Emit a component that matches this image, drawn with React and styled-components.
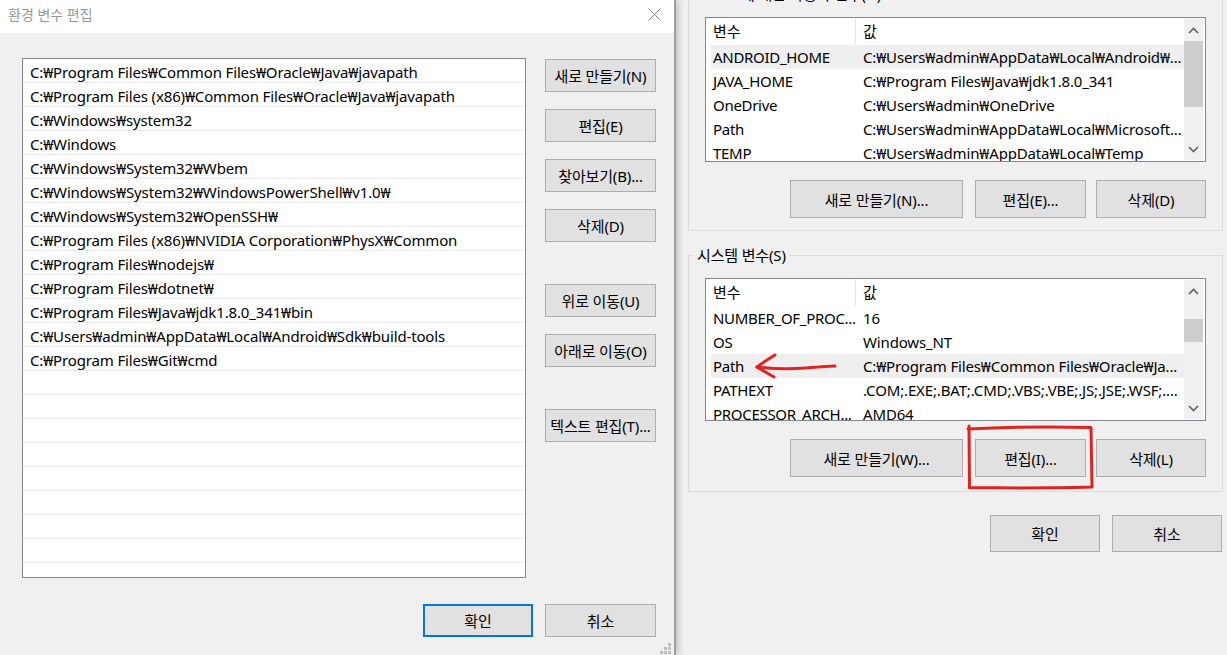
import React from 'react';
import styled, { createGlobalStyle } from 'styled-components';

const GlobalStyle = createGlobalStyle`
  html, body { margin: 0; padding: 0; width: 1227px; height: 655px; overflow: hidden; background: #f0f0f0; }
  body { font-family: "Noto Sans", "Noto Sans CJK KR", sans-serif; font-size: 15px; color: #000; letter-spacing: -0.15px; }
  * { box-sizing: border-box; }
`;

const Screen = styled.div`
  display: flex;
  width: 1227px;
  height: 655px;
  overflow: hidden;
  background: #f0f0f0;
`;

/* ---------- left dialog ---------- */
const Dialog = styled.div`
  position: relative;
  z-index: 2;
  flex: none;
  width: 676px;
  display: flex;
  flex-direction: column;
  background: #f0f0f0;
  border-right: 2px solid #9d9d9d;
  box-shadow: 2px 0 7px rgba(0, 0, 0, 0.22);
`;

const TitleBar = styled.div`
  height: 33px;
  background: #fff;
  display: flex;
  align-items: center;
  justify-content: space-between;
  padding: 0 13px 5px 8px;
`;

const Title = styled.span`
  color: #999;
  font-size: 14px;
  letter-spacing: 0;
`;

const DialogBody = styled.div`
  flex: 1;
  display: flex;
  flex-direction: column;
  padding: 25px 18px 0 22px;
`;

const MainRow = styled.div`
  display: flex;
  align-items: flex-start;
  gap: 19px;
`;

const PathList = styled.div`
  width: 504px;
  height: 520px;
  background: #fff;
  border: 1px solid #828790;
  overflow: hidden;
`;

const PathRow = styled.div`
  height: 24px;
  line-height: 23px;
  padding: 2px 0 0 7px;
  border-bottom: 1px solid #ececec;
  white-space: nowrap;
  overflow: hidden;
`;

const SideButtons = styled.div`
  display: flex;
  flex-direction: column;
  padding-top: 1px;
`;

const Button = styled.button`
  flex: none;
  width: ${(p) => p.$w || 111}px;
  height: ${(p) => p.$h || 33}px;
  margin-top: ${(p) => p.$mt || 0}px;
  padding: 0;
  background: #e1e1e1;
  border: ${(p) => (p.$default ? '2px solid #0078d7' : '1px solid #adadad')};
  font-family: inherit;
  font-size: 15px;
  letter-spacing: -0.15px;
  color: #000;
  white-space: nowrap;
  cursor: default;
`;

const Footer = styled.div`
  display: flex;
  justify-content: flex-end;
  gap: ${(p) => p.$gap || 12}px;
  margin-top: ${(p) => p.$mt || 26}px;
  padding-right: ${(p) => p.$pr || 0}px;
`;

const Grip = styled.svg`
  position: absolute;
  right: 2px;
  bottom: 0;
`;

/* ---------- right window ---------- */
const Window = styled.div`
  flex: 1;
  min-width: 0;
  display: flex;
  flex-direction: column;
  padding: 0 4px 0 12px;
`;

const GroupBox = styled.div`
  position: relative;
  min-width: 0;
  border: 1px solid #dcdcdc;
  margin-top: ${(p) => p.$mt}px;
  padding: 22px 16px ${(p) => p.$pb}px 16px;
  display: flex;
  flex-direction: column;
`;

const Legend = styled.span`
  position: absolute;
  top: -11px;
  left: 5px;
  padding: 0 3px;
  line-height: 20px;
  background: #f0f0f0;
  white-space: nowrap;
`;

const ListView = styled.div`
  position: relative;
  height: ${(p) => p.$h}px;
  display: flex;
  background: #fff;
  border: 1px solid #828790;
  overflow: hidden;
`;

const ListMain = styled.div`
  flex: 1;
  min-width: 0;
  display: flex;
  flex-direction: column;
`;

const Header = styled.div`
  flex: none;
  height: 27px;
  display: flex;
`;

const HeaderCell = styled.div`
  width: ${(p) => (p.$w ? `${p.$w}px` : 'auto')};
  flex: ${(p) => (p.$w ? 'none' : 1)};
  padding-left: 7px;
  line-height: 27px;
  border-right: ${(p) => (p.$w ? '1px solid #e5e5e5' : 'none')};
`;

const VarRow = styled.div`
  flex: none;
  height: 24px;
  margin-left: 5px;
  display: flex;
  align-items: center;
  background: ${(p) => (p.$hl ? '#efefef' : 'transparent')};
  white-space: nowrap;
`;

const NameCell = styled.div`
  width: 145px;
  flex: none;
  padding-left: 2px;
  overflow: hidden;
  letter-spacing: -0.3px;
`;

const ValueCell = styled.div`
  flex: 1;
  min-width: 0;
  padding-left: 7px;
  overflow: hidden;
`;

const ScrollBar = styled.div`
  flex: none;
  width: 19px;
  margin: 1px 2px 1px 0;
  background: #f0f0f0;
  display: flex;
  flex-direction: column;
`;

const ScrollArrow = styled.div`
  flex: none;
  height: 22px;
  display: flex;
  align-items: center;
  justify-content: center;
`;

const Track = styled.div`
  flex: 1;
`;

const Thumb = styled.div`
  margin-top: ${(p) => p.$top}px;
  height: ${(p) => p.$h}px;
  background: #cdcdcd;
`;

const ButtonRow = styled.div`
  display: flex;
  justify-content: flex-end;
  margin-top: 18px;
`;

const ButtonSlot = styled.div`
  position: relative;
  margin-left: ${(p) => p.$ml || 0}px;
`;

const Annotation = styled.svg`
  position: absolute;
  left: ${(p) => p.$l}px;
  top: ${(p) => p.$t}px;
  overflow: visible;
  pointer-events: none;
`;

const Chevron = ({ up }) => (
  <svg width="11" height="7" viewBox="0 0 11 7">
    <polyline
      points={up ? '1,6 5.5,1.5 10,6' : '1,1 5.5,5.5 10,1'}
      fill="none"
      stroke="#606060"
      strokeWidth="1.6"
    />
  </svg>
);

const paths = [
  'C:₩Program Files₩Common Files₩Oracle₩Java₩javapath',
  'C:₩Program Files (x86)₩Common Files₩Oracle₩Java₩javapath',
  'C:₩Windows₩system32',
  'C:₩Windows',
  'C:₩Windows₩System32₩Wbem',
  'C:₩Windows₩System32₩WindowsPowerShell₩v1.0₩',
  'C:₩Windows₩System32₩OpenSSH₩',
  'C:₩Program Files (x86)₩NVIDIA Corporation₩PhysX₩Common',
  'C:₩Program Files₩nodejs₩',
  'C:₩Program Files₩dotnet₩',
  'C:₩Program Files₩Java₩jdk1.8.0_341₩bin',
  'C:₩Users₩admin₩AppData₩Local₩Android₩Sdk₩build-tools',
  'C:₩Program Files₩Git₩cmd',
];
const pathRows = [...paths, ...Array(9).fill('')];

const userVars = [
  ['ANDROID_HOME', 'C:₩Users₩admin₩AppData₩Local₩Android₩...', true],
  ['JAVA_HOME', 'C:₩Program Files₩Java₩jdk1.8.0_341'],
  ['OneDrive', 'C:₩Users₩admin₩OneDrive'],
  ['Path', 'C:₩Users₩admin₩AppData₩Local₩Microsoft...'],
  ['TEMP', 'C:₩Users₩admin₩AppData₩Local₩Temp'],
];

const sysVars = [
  ['NUMBER_OF_PROC...', '16'],
  ['OS', 'Windows_NT'],
  ['Path', 'C:₩Program Files₩Common Files₩Oracle₩Ja...', true],
  ['PATHEXT', '.COM;.EXE;.BAT;.CMD;.VBS;.VBE;.JS;.JSE;.WSF;....'],
  ['PROCESSOR_ARCH...', 'AMD64'],
];

const VarList = ({ rows, height, thumbTop, thumbH, children }) => (
  <ListView $h={height}>
    <ListMain>
      <Header>
        <HeaderCell $w={150}>변수</HeaderCell>
        <HeaderCell>값</HeaderCell>
      </Header>
      {rows.map(([n, v, hl]) => (
        <VarRow key={n} $hl={hl}>
          <NameCell>{n}</NameCell>
          <ValueCell>{v}</ValueCell>
        </VarRow>
      ))}
    </ListMain>
    <ScrollBar>
      <ScrollArrow><Chevron up /></ScrollArrow>
      <Track><Thumb $top={thumbTop} $h={thumbH} /></Track>
      <ScrollArrow><Chevron /></ScrollArrow>
    </ScrollBar>
    {children}
  </ListView>
);

export default function App() {
  return (
    <Screen>
      <GlobalStyle />
      <Dialog>
        <TitleBar>
          <Title>환경 변수 편집</Title>
          <svg width="13" height="13" viewBox="0 0 13 13">
            <path d="M0.5 0.5 L12.5 12.5 M12.5 0.5 L0.5 12.5" stroke="#8a8a8a" strokeWidth="1" fill="none" />
          </svg>
        </TitleBar>
        <DialogBody>
          <MainRow>
            <PathList>
              {pathRows.map((p, i) => (
                <PathRow key={i}>{p}</PathRow>
              ))}
            </PathList>
            <SideButtons>
              <Button>새로 만들기(N)</Button>
              <Button $mt={17}>편집(E)</Button>
              <Button $mt={17}>찾아보기(B)...</Button>
              <Button $mt={17}>삭제(D)</Button>
              <Button $mt={42}>위로 이동(U)</Button>
              <Button $mt={17}>아래로 이동(O)</Button>
              <Button $mt={42}>텍스트 편집(T)...</Button>
            </SideButtons>
          </MainRow>
          <Footer>
            <Button $w={110} $default>확인</Button>
            <Button>취소</Button>
          </Footer>
        </DialogBody>
        <Grip width="12" height="12" viewBox="0 0 12 12">
          <g fill="#bdbdbd">
            <rect x="8" y="0" width="3" height="3" />
            <rect x="4" y="4" width="3" height="3" />
            <rect x="8" y="4" width="3" height="3" />
            <rect x="0" y="8" width="3" height="3" />
            <rect x="4" y="8" width="3" height="3" />
            <rect x="8" y="8" width="3" height="3" />
          </g>
        </Grip>
      </Dialog>

      <Window>
        <GroupBox $mt={-6} $pb={12}>
          <Legend>admin에 대한 사용자 변수(U)</Legend>
          <VarList rows={userVars} height={145} thumbTop={0} thumbH={66} />
          <ButtonRow>
            <ButtonSlot><Button $w={173} $h={38}>새로 만들기(N)...</Button></ButtonSlot>
            <ButtonSlot $ml={12}><Button $w={111} $h={38}>편집(E)...</Button></ButtonSlot>
            <ButtonSlot $ml={10}><Button $w={110} $h={38}>삭제(D)</Button></ButtonSlot>
          </ButtonRow>
        </GroupBox>

        <GroupBox $mt={24} $pb={14}>
          <Legend>시스템 변수(S)</Legend>
          <VarList rows={sysVars} height={143} thumbTop={17} thumbH={23}>
            <Annotation $l={45} $t={70} width="90" height="36" viewBox="0 0 90 36">
              <g fill="none" stroke="#e1231f" strokeWidth="3" strokeLinecap="round" strokeLinejoin="round">
                <path d="M24 6 Q 14 12 6 18 Q 14 23 23 28" />
                <path d="M6 18 Q 30 21 55 19 T 84 17" />
              </g>
            </Annotation>
          </VarList>
          <ButtonRow>
            <ButtonSlot><Button $w={173} $h={38}>새로 만들기(W)...</Button></ButtonSlot>
            <ButtonSlot $ml={12}>
              <Button $w={111} $h={38}>편집(I)...</Button>
              <Annotation $l={-9} $t={-15} width="130" height="68" viewBox="0 0 130 68">
                <path
                  d="M3 2 L3.5 64 M2 5 Q 60 2 125 3.5 L126 63 Q 70 64.5 4 63.5"
                  fill="none"
                  stroke="#e1231f"
                  strokeWidth="3"
                  strokeLinecap="round"
                  strokeLinejoin="round"
                />
              </Annotation>
            </ButtonSlot>
            <ButtonSlot $ml={10}><Button $w={110} $h={38}>삭제(L)</Button></ButtonSlot>
          </ButtonRow>
        </GroupBox>

        <Footer $mt={23} $gap={12} $pr={1}>
          <Button $w={110} $h={37}>확인</Button>
          <Button $w={110} $h={37}>취소</Button>
        </Footer>
      </Window>
    </Screen>
  );
}
